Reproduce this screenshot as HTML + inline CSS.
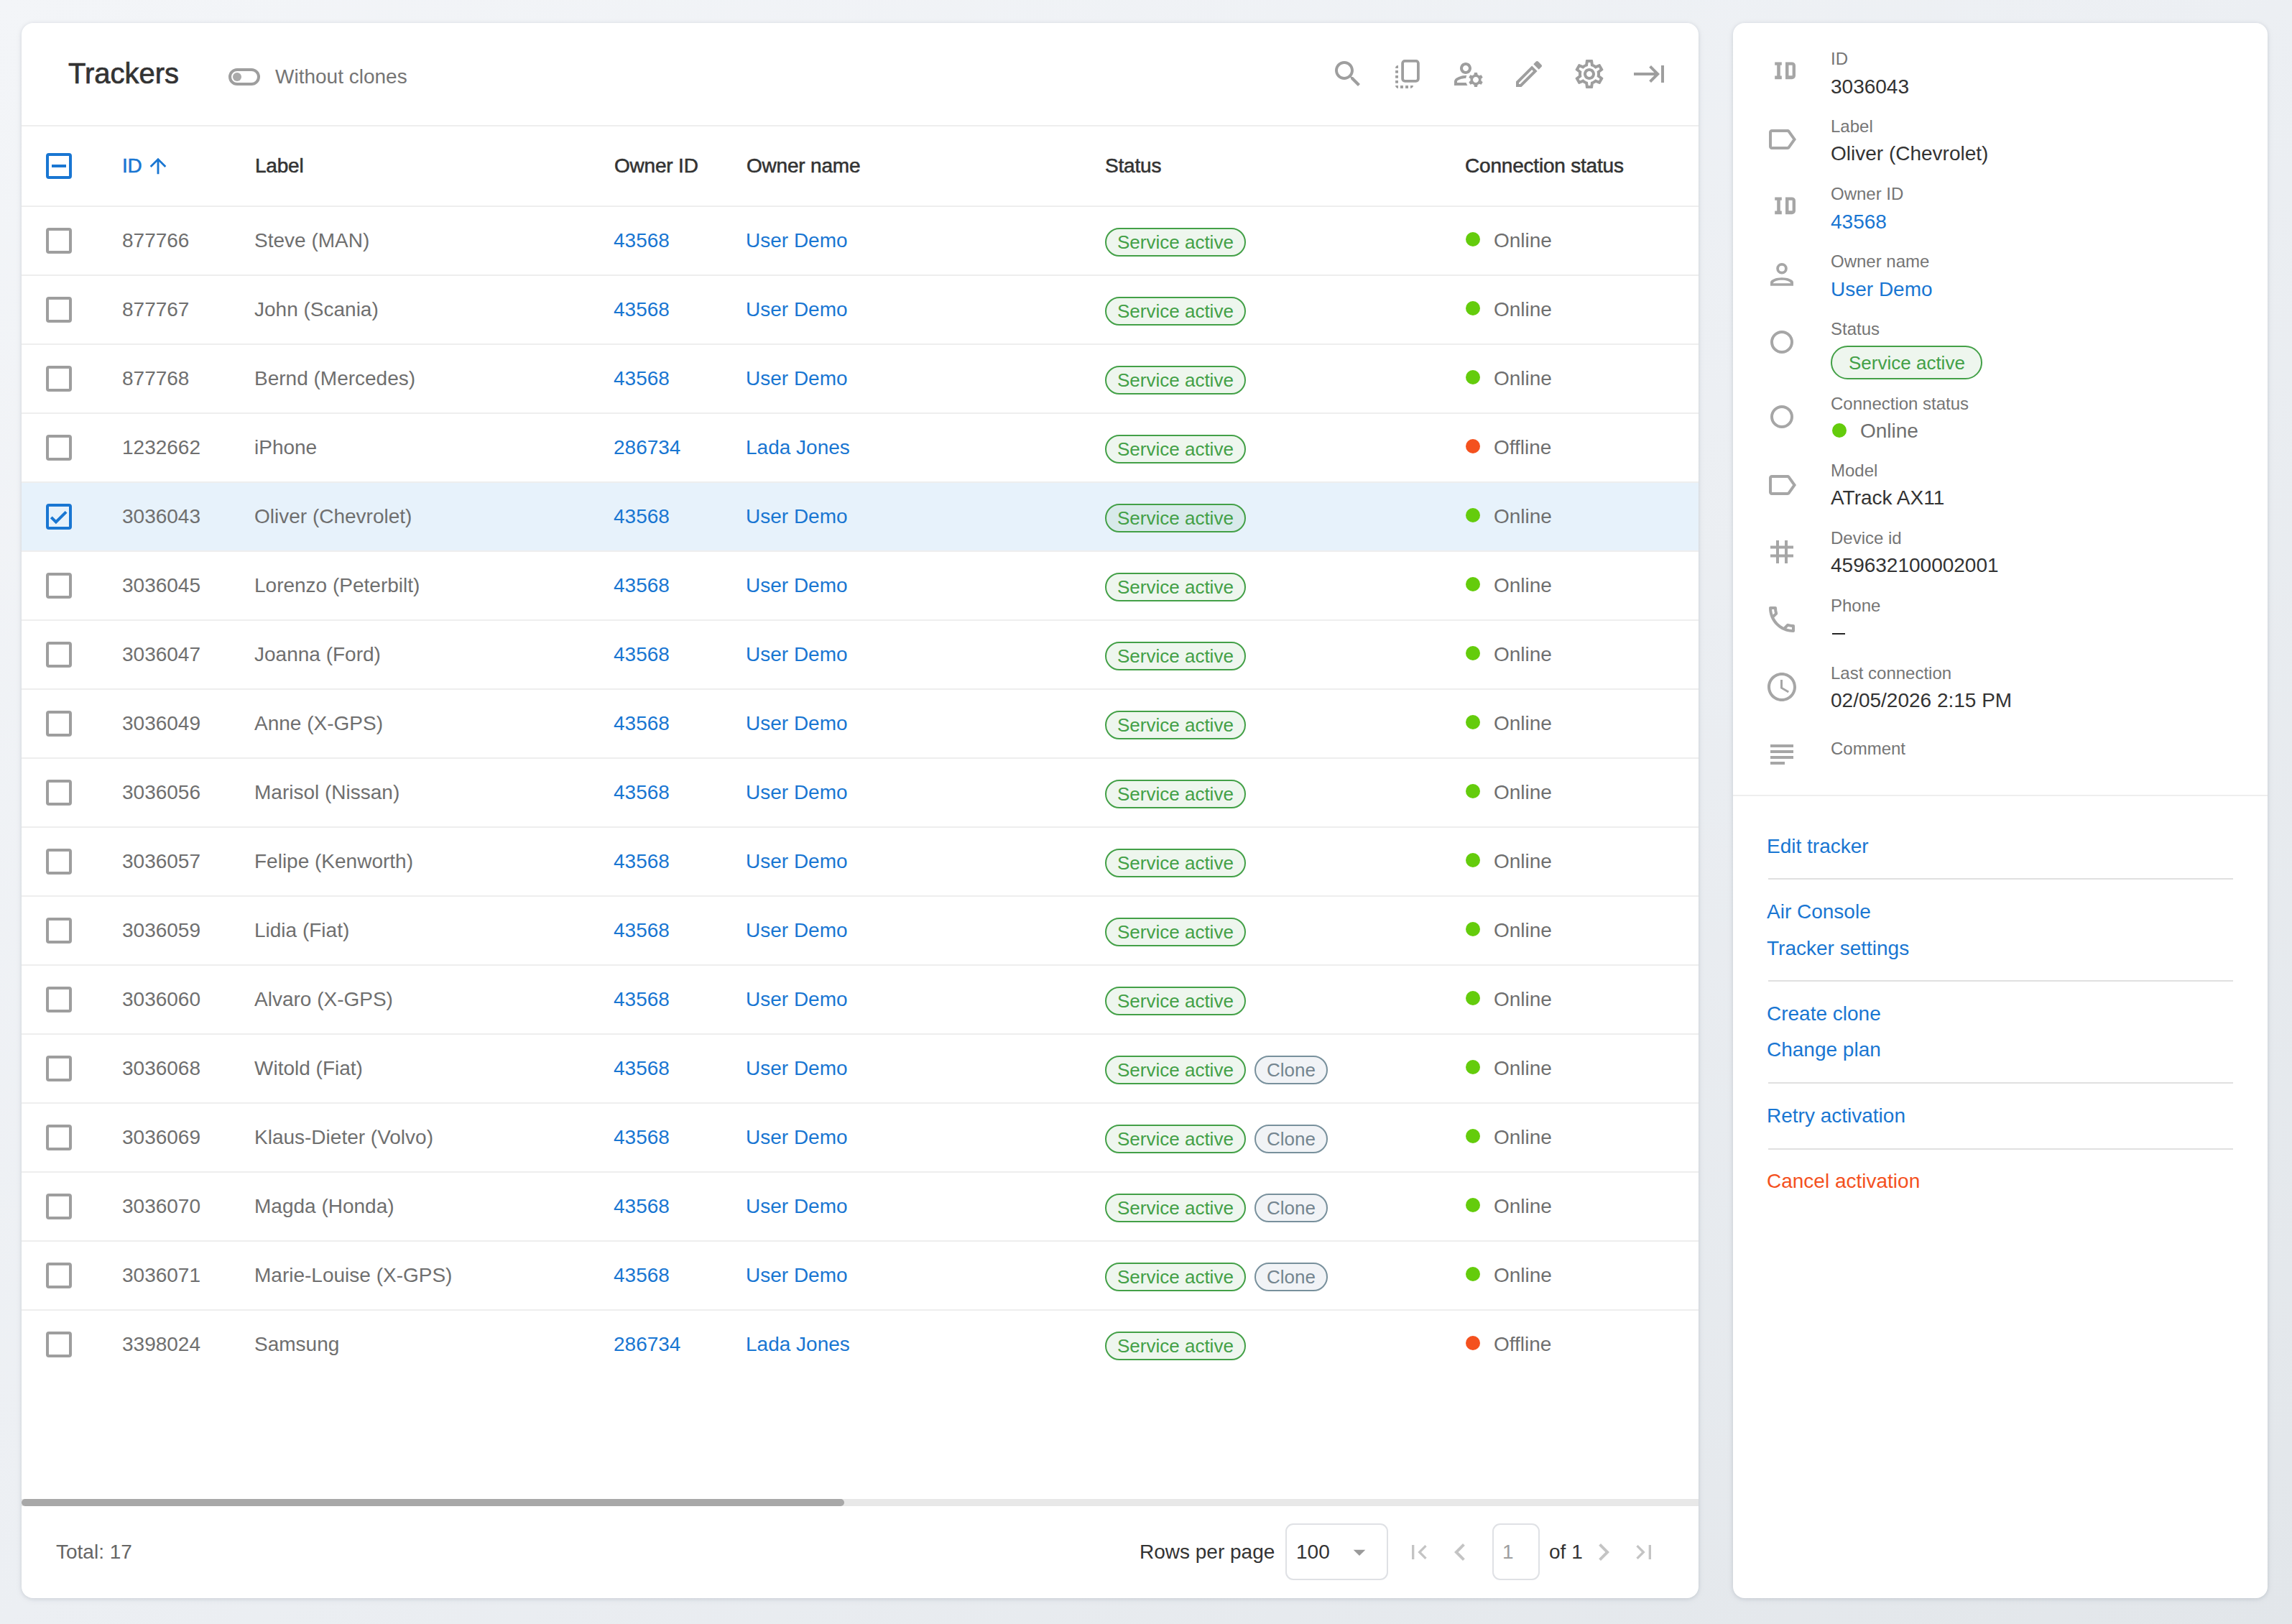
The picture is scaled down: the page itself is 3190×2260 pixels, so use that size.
<!DOCTYPE html><html><head><meta charset="utf-8"><style>
*{margin:0;padding:0;box-sizing:border-box}
html,body{width:3190px;height:2260px;overflow:hidden}
body{background:linear-gradient(to bottom right,#f3f5f8 0%,#eceff3 50%,#e2e6ea 100%);font-family:"Liberation Sans",sans-serif;position:relative;color:#333}
.card{position:absolute;background:#fff;border-radius:16px;box-shadow:0 1px 5px rgba(40,50,70,.13),0 2px 12px rgba(40,50,70,.05)}
.ic{position:absolute;display:block}
.t{position:absolute;white-space:nowrap;line-height:1}
.med{-webkit-text-stroke:0.55px currentColor;letter-spacing:-0.2px}
.ttl{-webkit-text-stroke:0.7px currentColor}
.hl{position:absolute;height:2px;background:#eeeeee}
.cb{position:absolute;width:36px;height:36px;border:4px solid #9e9e9e;border-radius:4px}
.cb.on{border-color:#1976d2}
.chip{position:absolute;height:40px;border:2px solid #43a047;background:rgba(67,160,71,.09);color:#43a047;border-radius:20px;font-size:26px;line-height:37px;padding:0 15px;white-space:nowrap}
.chip.clone{border-color:#78909c;background:#f1f3f6;color:#74858f}
.dot{position:absolute;width:20px;height:20px;border-radius:50%;background:#64cc0c}
.dot.off{background:#f4511e}
.row{position:absolute;left:0;width:2334px;height:96px}
.blue{color:#1976d2}
.gray{color:#6f6f6f}
</style></head><body>
<div class="card" style="left:30px;top:32px;width:2334px;height:2192px;overflow:hidden">
<div class="t ttl" style="left:65.0px;top:50.1px;font-size:40px;color:#333;">Trackers</div>
<div style="position:absolute;left:288px;top:63px;width:44px;height:24px;border:4px solid #9e9e9e;border-radius:12px"></div>
<div style="position:absolute;left:294px;top:69px;width:12px;height:12px;border-radius:6px;background:#aaaaaa"></div>
<div class="t " style="left:353.0px;top:60.9px;font-size:28px;color:#757575;">Without clones</div>
<svg class="ic" style="left:1822px;top:47px;width:48px;height:48px;fill:#9e9e9e;color:#9e9e9e" viewBox="0 0 24 24"><path d="M15.5 14h-.79l-.28-.27C15.41 12.59 16 11.11 16 9.5 16 5.91 13.09 3 9.5 3S3 5.91 3 9.5 5.91 16 9.5 16c1.61 0 3.09-.59 4.23-1.57l.27.28v.79l5 4.99L20.49 19l-4.99-5zm-6 0C7.01 14 5 11.99 5 9.5S7.01 5 9.5 5 14 7.01 14 9.5 11.99 14 9.5 14z"/></svg>
<svg class="ic" style="left:1906px;top:47px;width:48px;height:48px;fill:#9e9e9e;color:#9e9e9e" viewBox="0 0 24 24"><g transform="scale(0.5)"><rect x="16.1" y="5.8" width="21.8" height="28" rx="3.2" fill="none" stroke="currentColor" stroke-width="3.8"/><path d="M10 12V15.9H6.1A3.9 3.9 0 0 1 10 12ZM6.1 19.1h3.9v3.7H6.1zM6.1 26h3.9v3.7H6.1zM6.1 33h3.9v3.7H6.1zM6.1 40H10V44A3.9 3.9 0 0 1 6.1 40ZM13 40h3.9v4H13zM20.1 40H24v4h-3.9zM27 40H31A3.9 3.9 0 0 1 27 44Z"/></g></svg>
<svg class="ic" style="left:1990px;top:47px;width:48px;height:48px;fill:#9e9e9e;color:#9e9e9e" viewBox="0 0 24 24"><path d="M4 18v-.65c0-.34.16-.66.41-.81C6.1 15.53 8.03 15 10 15c.03 0 .05 0 .08.01.1-.7.3-1.37.59-1.98-.22-.02-.44-.03-.67-.03-2.420 0-4.68.67-6.61 1.82-.88.52-1.39 1.5-1.39 2.53V20h9.26c-.42-.6-.75-1.28-.97-2H4zM10 12c2.21 0 4-1.79 4-4s-1.79-4-4-4-4 1.79-4 4 1.79 4 4 4zm0-6c1.1 0 2 .9 2 2s-.9 2-2 2-2-.9-2-2 .9-2 2-2zM20.75 16c0-.22-.03-.42-.06-.63l1.14-1.01-1-1.73-1.45.49c-.32-.27-.68-.48-1.08-.63L18 11h-2l-.3 1.49c-.4.15-.76.36-1.08.63l-1.45-.49-1 1.73 1.14 1.01c-.03.21-.06.41-.06.63s.03.42.06.63l-1.14 1.01 1 1.73 1.45-.49c.32.27.68.48 1.08.63L16 21h2l.3-1.49c.4-.15.76-.36 1.08-.63l1.45.49 1-1.73-1.14-1.01c.03-.21.06-.41.06-.63zM17 18c-1.1 0-2-.9-2-2s.9-2 2-2 2 .9 2 2-.9 2-2 2z"/></svg>
<svg class="ic" style="left:2074px;top:47px;width:48px;height:48px;fill:#9e9e9e;color:#9e9e9e" viewBox="0 0 24 24"><path d="M3 17.25V21h3.75L17.81 9.94l-3.75-3.75L3 17.25zM5.92 19H5v-.92l9.06-9.06.92.92L5.92 19zM20.71 5.63l-2.34-2.34c-.2-.2-.45-.29-.71-.29s-.51.1-.7.29l-1.83 1.83 3.75 3.75 1.83-1.83c.39-.39.39-1.02 0-1.41z"/></svg>
<svg class="ic" style="left:2158px;top:47px;width:48px;height:48px;fill:#9e9e9e;color:#9e9e9e" viewBox="0 0 24 24"><path d="M19.43 12.98c.04-.32.07-.64.07-.98 0-.34-.03-.66-.07-.98l2.11-1.65c.19-.15.24-.42.12-.64l-2-3.46c-.09-.16-.26-.25-.44-.25-.06 0-.12.01-.17.03l-2.49 1c-.52-.4-1.08-.73-1.69-.98l-.38-2.65C14.46 2.18 14.25 2 14 2h-4c-.25 0-.46.18-.49.42l-.38 2.65c-.61.25-1.170.59-1.69.98l-2.49-1c-.06-.02-.12-.03-.18-.03-.17 0-.34.09-.43.25l-2 3.46c-.13.22-.07.49.12.64l2.11 1.65c-.04.32-.07.65-.07.98 0 .33.03.66.07.98l-2.11 1.65c-.19.15-.24.42-.12.64l2 3.46c.09.16.26.25.44.25.06 0 .12-.01.17-.03l2.49-1c.52.4 1.08.73 1.69.98l.38 2.65c.03.24.24.42.49.42h4c.25 0 .46-.18.49-.42l.38-2.65c.61-.25 1.17-.59 1.69-.98l2.49 1c.06.02.12.03.18.03.17 0 .34-.09.43-.25l2-3.46c.12-.22.07-.49-.12-.64l-2.11-1.65zm-1.98-1.71c.04.31.05.52.05.73 0 .21-.02.43-.05.73l-.14 1.13.89.7 1.08.84-.7 1.21-1.27-.51-1.04-.42-.9.68c-.43.32-.84.56-1.25.73l-1.06.43-.16 1.13-.2 1.35h-1.4l-.19-1.35-.16-1.130-1.06-.43c-.43-.18-.83-.41-1.23-.71l-.91-.7-1.06.43-1.27.51-.7-1.21 1.08-.84.89-.7-.14-1.13c-.03-.31-.05-.54-.05-.74s.02-.43.05-.73l.14-1.13-.89-.7-1.08-.84.7-1.21 1.27.51 1.04.42.9-.68c.43-.32.84-.56 1.25-.73l1.06-.43.16-1.13.2-1.35h1.39l.19 1.35.16 1.13 1.06.43c.43.18.83.41 1.23.71l.91.7 1.06-.43 1.27-.51.7 1.21-1.07.85-.89.7.14 1.13zM12 8c-2.21 0-4 1.79-4 4s1.79 4 4 4 4-1.79 4-4-1.79-4-4-4zm0 6c-1.1 0-2-.9-2-2s.9-2 2-2 2 .9 2 2-.9 2-2 2z"/></svg>
<svg class="ic" style="left:2242px;top:47px;width:48px;height:48px;fill:#9e9e9e;color:#9e9e9e" viewBox="0 0 24 24"><path d="M11.59 7.41L15.17 11H1v2h14.17l-3.59 3.59L13 18l6-6-6-6-1.41 1.41zM20 6v12h2V6h-2z"/></svg>
<div class="hl" style="left:0;top:142px;width:2334px"></div>
<div class="cb on" style="left:34px;top:181px"></div>
<div style="position:absolute;left:42px;top:197px;width:20px;height:4px;background:#1976d2"></div>
<div class="t med" style="left:140.0px;top:184.7px;font-size:28px;color:#1976d2;">ID</div>
<svg class="ic" style="left:172.6px;top:182.1px;width:34px;height:34px;fill:#1976d2;color:#1976d2" viewBox="0 0 24 24"><path d="M4 12l1.41 1.41L11 7.83V20h2V7.83l5.58 5.59L20 12l-8-8-8 8z"/></svg>
<div class="t med" style="left:325.0px;top:184.7px;font-size:28px;color:#333;">Label</div>
<div class="t med" style="left:825.0px;top:184.7px;font-size:28px;color:#333;">Owner ID</div>
<div class="t med" style="left:1009.0px;top:184.7px;font-size:28px;color:#333;">Owner name</div>
<div class="t med" style="left:1508.0px;top:184.7px;font-size:28px;color:#333;">Status</div>
<div class="t med" style="left:2009.0px;top:184.7px;font-size:28px;color:#333;">Connection status</div>
<div class="hl" style="left:0;top:254px;width:2334px"></div>
<div class="cb" style="left:34px;top:285px"></div>
<div class="t gray" style="left:140.0px;top:289.4px;font-size:28px;">877766</div>
<div class="t gray" style="left:324.0px;top:289.4px;font-size:28px;">Steve (MAN)</div>
<div class="t blue" style="left:824.0px;top:289.4px;font-size:28px;">43568</div>
<div class="t blue" style="left:1008.0px;top:289.4px;font-size:28px;">User Demo</div>
<div class="chip" style="left:1508px;top:285px">Service active</div>
<div class="dot" style="left:2010px;top:291px"></div>
<div class="t gray" style="left:2049.0px;top:289.4px;font-size:28px;">Online</div>
<div class="hl" style="left:0;top:350px;width:2334px"></div>
<div class="cb" style="left:34px;top:381px"></div>
<div class="t gray" style="left:140.0px;top:385.4px;font-size:28px;">877767</div>
<div class="t gray" style="left:324.0px;top:385.4px;font-size:28px;">John (Scania)</div>
<div class="t blue" style="left:824.0px;top:385.4px;font-size:28px;">43568</div>
<div class="t blue" style="left:1008.0px;top:385.4px;font-size:28px;">User Demo</div>
<div class="chip" style="left:1508px;top:381px">Service active</div>
<div class="dot" style="left:2010px;top:387px"></div>
<div class="t gray" style="left:2049.0px;top:385.4px;font-size:28px;">Online</div>
<div class="hl" style="left:0;top:446px;width:2334px"></div>
<div class="cb" style="left:34px;top:477px"></div>
<div class="t gray" style="left:140.0px;top:481.4px;font-size:28px;">877768</div>
<div class="t gray" style="left:324.0px;top:481.4px;font-size:28px;">Bernd (Mercedes)</div>
<div class="t blue" style="left:824.0px;top:481.4px;font-size:28px;">43568</div>
<div class="t blue" style="left:1008.0px;top:481.4px;font-size:28px;">User Demo</div>
<div class="chip" style="left:1508px;top:477px">Service active</div>
<div class="dot" style="left:2010px;top:483px"></div>
<div class="t gray" style="left:2049.0px;top:481.4px;font-size:28px;">Online</div>
<div class="hl" style="left:0;top:542px;width:2334px"></div>
<div class="cb" style="left:34px;top:573px"></div>
<div class="t gray" style="left:140.0px;top:577.4px;font-size:28px;">1232662</div>
<div class="t gray" style="left:324.0px;top:577.4px;font-size:28px;">iPhone</div>
<div class="t blue" style="left:824.0px;top:577.4px;font-size:28px;">286734</div>
<div class="t blue" style="left:1008.0px;top:577.4px;font-size:28px;">Lada Jones</div>
<div class="chip" style="left:1508px;top:573px">Service active</div>
<div class="dot off" style="left:2010px;top:579px"></div>
<div class="t gray" style="left:2049.0px;top:577.4px;font-size:28px;">Offline</div>
<div style="position:absolute;left:0;top:640px;width:2334px;height:94px;background:#e7f2fb"></div>
<div class="hl" style="left:0;top:638px;width:2334px"></div>
<div class="cb on" style="left:34px;top:669px"></div>
<svg class="ic" style="left:34px;top:669px;width:36px;height:36px;fill:#1976d2;color:#1976d2" viewBox="0 0 36 36"><path d="M7.3 18.9L13.9 25.5 28.1 11.3" fill="none" stroke="currentColor" stroke-width="4" stroke-linecap="butt" stroke-linejoin="miter"/></svg>
<div class="t gray" style="left:140.0px;top:673.4px;font-size:28px;">3036043</div>
<div class="t gray" style="left:324.0px;top:673.4px;font-size:28px;">Oliver (Chevrolet)</div>
<div class="t blue" style="left:824.0px;top:673.4px;font-size:28px;">43568</div>
<div class="t blue" style="left:1008.0px;top:673.4px;font-size:28px;">User Demo</div>
<div class="chip" style="left:1508px;top:669px">Service active</div>
<div class="dot" style="left:2010px;top:675px"></div>
<div class="t gray" style="left:2049.0px;top:673.4px;font-size:28px;">Online</div>
<div class="hl" style="left:0;top:734px;width:2334px"></div>
<div class="cb" style="left:34px;top:765px"></div>
<div class="t gray" style="left:140.0px;top:769.4px;font-size:28px;">3036045</div>
<div class="t gray" style="left:324.0px;top:769.4px;font-size:28px;">Lorenzo (Peterbilt)</div>
<div class="t blue" style="left:824.0px;top:769.4px;font-size:28px;">43568</div>
<div class="t blue" style="left:1008.0px;top:769.4px;font-size:28px;">User Demo</div>
<div class="chip" style="left:1508px;top:765px">Service active</div>
<div class="dot" style="left:2010px;top:771px"></div>
<div class="t gray" style="left:2049.0px;top:769.4px;font-size:28px;">Online</div>
<div class="hl" style="left:0;top:830px;width:2334px"></div>
<div class="cb" style="left:34px;top:861px"></div>
<div class="t gray" style="left:140.0px;top:865.4px;font-size:28px;">3036047</div>
<div class="t gray" style="left:324.0px;top:865.4px;font-size:28px;">Joanna (Ford)</div>
<div class="t blue" style="left:824.0px;top:865.4px;font-size:28px;">43568</div>
<div class="t blue" style="left:1008.0px;top:865.4px;font-size:28px;">User Demo</div>
<div class="chip" style="left:1508px;top:861px">Service active</div>
<div class="dot" style="left:2010px;top:867px"></div>
<div class="t gray" style="left:2049.0px;top:865.4px;font-size:28px;">Online</div>
<div class="hl" style="left:0;top:926px;width:2334px"></div>
<div class="cb" style="left:34px;top:957px"></div>
<div class="t gray" style="left:140.0px;top:961.4px;font-size:28px;">3036049</div>
<div class="t gray" style="left:324.0px;top:961.4px;font-size:28px;">Anne (X-GPS)</div>
<div class="t blue" style="left:824.0px;top:961.4px;font-size:28px;">43568</div>
<div class="t blue" style="left:1008.0px;top:961.4px;font-size:28px;">User Demo</div>
<div class="chip" style="left:1508px;top:957px">Service active</div>
<div class="dot" style="left:2010px;top:963px"></div>
<div class="t gray" style="left:2049.0px;top:961.4px;font-size:28px;">Online</div>
<div class="hl" style="left:0;top:1022px;width:2334px"></div>
<div class="cb" style="left:34px;top:1053px"></div>
<div class="t gray" style="left:140.0px;top:1057.4px;font-size:28px;">3036056</div>
<div class="t gray" style="left:324.0px;top:1057.4px;font-size:28px;">Marisol (Nissan)</div>
<div class="t blue" style="left:824.0px;top:1057.4px;font-size:28px;">43568</div>
<div class="t blue" style="left:1008.0px;top:1057.4px;font-size:28px;">User Demo</div>
<div class="chip" style="left:1508px;top:1053px">Service active</div>
<div class="dot" style="left:2010px;top:1059px"></div>
<div class="t gray" style="left:2049.0px;top:1057.4px;font-size:28px;">Online</div>
<div class="hl" style="left:0;top:1118px;width:2334px"></div>
<div class="cb" style="left:34px;top:1149px"></div>
<div class="t gray" style="left:140.0px;top:1153.4px;font-size:28px;">3036057</div>
<div class="t gray" style="left:324.0px;top:1153.4px;font-size:28px;">Felipe (Kenworth)</div>
<div class="t blue" style="left:824.0px;top:1153.4px;font-size:28px;">43568</div>
<div class="t blue" style="left:1008.0px;top:1153.4px;font-size:28px;">User Demo</div>
<div class="chip" style="left:1508px;top:1149px">Service active</div>
<div class="dot" style="left:2010px;top:1155px"></div>
<div class="t gray" style="left:2049.0px;top:1153.4px;font-size:28px;">Online</div>
<div class="hl" style="left:0;top:1214px;width:2334px"></div>
<div class="cb" style="left:34px;top:1245px"></div>
<div class="t gray" style="left:140.0px;top:1249.4px;font-size:28px;">3036059</div>
<div class="t gray" style="left:324.0px;top:1249.4px;font-size:28px;">Lidia (Fiat)</div>
<div class="t blue" style="left:824.0px;top:1249.4px;font-size:28px;">43568</div>
<div class="t blue" style="left:1008.0px;top:1249.4px;font-size:28px;">User Demo</div>
<div class="chip" style="left:1508px;top:1245px">Service active</div>
<div class="dot" style="left:2010px;top:1251px"></div>
<div class="t gray" style="left:2049.0px;top:1249.4px;font-size:28px;">Online</div>
<div class="hl" style="left:0;top:1310px;width:2334px"></div>
<div class="cb" style="left:34px;top:1341px"></div>
<div class="t gray" style="left:140.0px;top:1345.4px;font-size:28px;">3036060</div>
<div class="t gray" style="left:324.0px;top:1345.4px;font-size:28px;">Alvaro (X-GPS)</div>
<div class="t blue" style="left:824.0px;top:1345.4px;font-size:28px;">43568</div>
<div class="t blue" style="left:1008.0px;top:1345.4px;font-size:28px;">User Demo</div>
<div class="chip" style="left:1508px;top:1341px">Service active</div>
<div class="dot" style="left:2010px;top:1347px"></div>
<div class="t gray" style="left:2049.0px;top:1345.4px;font-size:28px;">Online</div>
<div class="hl" style="left:0;top:1406px;width:2334px"></div>
<div class="cb" style="left:34px;top:1437px"></div>
<div class="t gray" style="left:140.0px;top:1441.4px;font-size:28px;">3036068</div>
<div class="t gray" style="left:324.0px;top:1441.4px;font-size:28px;">Witold (Fiat)</div>
<div class="t blue" style="left:824.0px;top:1441.4px;font-size:28px;">43568</div>
<div class="t blue" style="left:1008.0px;top:1441.4px;font-size:28px;">User Demo</div>
<div class="chip" style="left:1508px;top:1437px">Service active</div>
<div class="chip clone" style="left:1716px;top:1437px">Clone</div>
<div class="dot" style="left:2010px;top:1443px"></div>
<div class="t gray" style="left:2049.0px;top:1441.4px;font-size:28px;">Online</div>
<div class="hl" style="left:0;top:1502px;width:2334px"></div>
<div class="cb" style="left:34px;top:1533px"></div>
<div class="t gray" style="left:140.0px;top:1537.4px;font-size:28px;">3036069</div>
<div class="t gray" style="left:324.0px;top:1537.4px;font-size:28px;">Klaus-Dieter (Volvo)</div>
<div class="t blue" style="left:824.0px;top:1537.4px;font-size:28px;">43568</div>
<div class="t blue" style="left:1008.0px;top:1537.4px;font-size:28px;">User Demo</div>
<div class="chip" style="left:1508px;top:1533px">Service active</div>
<div class="chip clone" style="left:1716px;top:1533px">Clone</div>
<div class="dot" style="left:2010px;top:1539px"></div>
<div class="t gray" style="left:2049.0px;top:1537.4px;font-size:28px;">Online</div>
<div class="hl" style="left:0;top:1598px;width:2334px"></div>
<div class="cb" style="left:34px;top:1629px"></div>
<div class="t gray" style="left:140.0px;top:1633.4px;font-size:28px;">3036070</div>
<div class="t gray" style="left:324.0px;top:1633.4px;font-size:28px;">Magda (Honda)</div>
<div class="t blue" style="left:824.0px;top:1633.4px;font-size:28px;">43568</div>
<div class="t blue" style="left:1008.0px;top:1633.4px;font-size:28px;">User Demo</div>
<div class="chip" style="left:1508px;top:1629px">Service active</div>
<div class="chip clone" style="left:1716px;top:1629px">Clone</div>
<div class="dot" style="left:2010px;top:1635px"></div>
<div class="t gray" style="left:2049.0px;top:1633.4px;font-size:28px;">Online</div>
<div class="hl" style="left:0;top:1694px;width:2334px"></div>
<div class="cb" style="left:34px;top:1725px"></div>
<div class="t gray" style="left:140.0px;top:1729.4px;font-size:28px;">3036071</div>
<div class="t gray" style="left:324.0px;top:1729.4px;font-size:28px;">Marie-Louise (X-GPS)</div>
<div class="t blue" style="left:824.0px;top:1729.4px;font-size:28px;">43568</div>
<div class="t blue" style="left:1008.0px;top:1729.4px;font-size:28px;">User Demo</div>
<div class="chip" style="left:1508px;top:1725px">Service active</div>
<div class="chip clone" style="left:1716px;top:1725px">Clone</div>
<div class="dot" style="left:2010px;top:1731px"></div>
<div class="t gray" style="left:2049.0px;top:1729.4px;font-size:28px;">Online</div>
<div class="hl" style="left:0;top:1790px;width:2334px"></div>
<div class="cb" style="left:34px;top:1821px"></div>
<div class="t gray" style="left:140.0px;top:1825.4px;font-size:28px;">3398024</div>
<div class="t gray" style="left:324.0px;top:1825.4px;font-size:28px;">Samsung</div>
<div class="t blue" style="left:824.0px;top:1825.4px;font-size:28px;">286734</div>
<div class="t blue" style="left:1008.0px;top:1825.4px;font-size:28px;">Lada Jones</div>
<div class="chip" style="left:1508px;top:1821px">Service active</div>
<div class="dot off" style="left:2010px;top:1827px"></div>
<div class="t gray" style="left:2049.0px;top:1825.4px;font-size:28px;">Offline</div>
<div style="position:absolute;left:0;top:2054px;width:2334px;height:10px;background:#e8e8e8"></div>
<div style="position:absolute;left:0;top:2054px;width:1145px;height:10px;background:#a8a8a8;border-radius:5px"></div>
<div class="t " style="left:48.0px;top:2113.9px;font-size:28px;color:#666;">Total: 17</div>
<div class="t " style="left:1556.0px;top:2113.9px;font-size:28px;color:#333;">Rows per page</div>
<div style="position:absolute;left:1759px;top:2088px;width:143px;height:79px;border:2px solid #dfe1e5;border-radius:11px"></div>
<div class="t " style="left:1774.0px;top:2113.9px;font-size:28px;color:#333;">100</div>
<svg class="ic" style="left:1842px;top:2107.6px;width:40px;height:40px;fill:#9a9a9a;color:#9a9a9a" viewBox="0 0 24 24"><path d="M7 10l5 5 5-5z"/></svg>
<svg class="ic" style="left:1925.4px;top:2108px;width:40px;height:40px;fill:#c4c4c4;color:#c4c4c4" viewBox="0 0 24 24"><path d="M18.41 16.59L13.82 12l4.59-4.59L17 6l-6 6 6 6zM6 6h2v12H6z"/></svg>
<svg class="ic" style="left:1977.8px;top:2104px;width:48px;height:48px;fill:#c4c4c4;color:#c4c4c4" viewBox="0 0 24 24"><path d="M15.41 7.41L14 6l-6 6 6 6 1.41-1.41L10.83 12z"/></svg>
<div style="position:absolute;left:2047px;top:2088px;width:66px;height:79px;border:2px solid #dfe1e5;border-radius:11px"></div>
<div class="t " style="left:2061.0px;top:2113.9px;font-size:28px;color:#9e9e9e;">1</div>
<div class="t " style="left:2126.0px;top:2113.9px;font-size:28px;color:#333;">of 1</div>
<svg class="ic" style="left:2178px;top:2104px;width:48px;height:48px;fill:#c4c4c4;color:#c4c4c4" viewBox="0 0 24 24"><path d="M10 6L8.59 7.41 13.17 12l-4.58 4.59L10 18l6-6z"/></svg>
<svg class="ic" style="left:2238.2px;top:2108px;width:40px;height:40px;fill:#c4c4c4;color:#c4c4c4" viewBox="0 0 24 24"><path d="M5.59 7.41L10.18 12l-4.59 4.59L7 18l6-6-6-6zM16 6h2v12h-2z"/></svg>
</div>
<div class="card" style="left:2412px;top:32px;width:744px;height:2192px;overflow:hidden">
<svg class="ic" style="left:44px;top:41.5px;width:48px;height:48px;fill:#a6a6a6;color:#a6a6a6" viewBox="0 0 48 48"><path d="M14.2 12.4h9.6v4.3h-2v14.9h2v4.6h-9.6v-4.6h3v-14.9h-3zM29 12.4h9a5 5 0 0 1 5 5v13.8a5 5 0 0 1-5 5h-9zM33.5 16.7v14.6h5.1v-14.6z" fill-rule="evenodd"/></svg>
<div class="t " style="left:136.0px;top:37.7px;font-size:24px;color:#757575;">ID</div>
<div class="t " style="left:136.0px;top:74.9px;font-size:28px;color:#333;">3036043</div>
<svg class="ic" style="left:44px;top:138px;width:48px;height:48px;fill:#a6a6a6;color:#a6a6a6" viewBox="0 0 24 24"><path d="M17.63 5.84C17.27 5.33 16.67 5 16 5L5 5.01C3.9 5.01 3 5.9 3 7v10c0 1.1.9 1.99 2 1.99L16 19c.67 0 1.27-.33 1.63-.84L22 12l-4.37-6.16zM16 17H5V7h11l3.55 5L16 17z"/></svg>
<div class="t " style="left:136.0px;top:132.2px;font-size:24px;color:#757575;">Label</div>
<div class="t " style="left:136.0px;top:168.4px;font-size:28px;color:#333;">Oliver (Chevrolet)</div>
<svg class="ic" style="left:44px;top:229.5px;width:48px;height:48px;fill:#a6a6a6;color:#a6a6a6" viewBox="0 0 48 48"><path d="M14.2 12.4h9.6v4.3h-2v14.9h2v4.6h-9.6v-4.6h3v-14.9h-3zM29 12.4h9a5 5 0 0 1 5 5v13.8a5 5 0 0 1-5 5h-9zM33.5 16.7v14.6h5.1v-14.6z" fill-rule="evenodd"/></svg>
<div class="t " style="left:136.0px;top:226.2px;font-size:24px;color:#757575;">Owner ID</div>
<div class="t " style="left:136.0px;top:262.9px;font-size:28px;color:#333;"><span class="blue">43568</span></div>
<svg class="ic" style="left:44px;top:326px;width:48px;height:48px;fill:#a6a6a6;color:#a6a6a6" viewBox="0 0 48 48"><circle cx="24" cy="15.8" r="5.9" fill="none" stroke="currentColor" stroke-width="3.8"/><path fill-rule="evenodd" d="M8 39.8V35C8 31 16 28.2 24 28.2S40 31 40 35V39.8ZM11.6 36.3H36.4C35.6 33.6 30 31.7 24 31.7S12.4 33.6 11.6 36.3Z"/></svg>
<div class="t " style="left:136.0px;top:319.7px;font-size:24px;color:#757575;">Owner name</div>
<div class="t " style="left:136.0px;top:356.9px;font-size:28px;color:#333;"><span class="blue">User Demo</span></div>
<svg class="ic" style="left:44px;top:419.8px;width:48px;height:48px;fill:#a6a6a6;color:#a6a6a6" viewBox="0 0 48 48"><circle cx="24" cy="24" r="14" fill="none" stroke="currentColor" stroke-width="4"/></svg>
<div class="t " style="left:136.0px;top:414.2px;font-size:24px;color:#757575;">Status</div>
<svg class="ic" style="left:44px;top:523.8px;width:48px;height:48px;fill:#a6a6a6;color:#a6a6a6" viewBox="0 0 48 48"><circle cx="24" cy="24" r="14" fill="none" stroke="currentColor" stroke-width="4"/></svg>
<div class="t " style="left:136.0px;top:517.7px;font-size:24px;color:#757575;">Connection status</div>
<svg class="ic" style="left:44px;top:619px;width:48px;height:48px;fill:#a6a6a6;color:#a6a6a6" viewBox="0 0 24 24"><path d="M17.63 5.84C17.27 5.33 16.67 5 16 5L5 5.01C3.9 5.01 3 5.9 3 7v10c0 1.1.9 1.99 2 1.99L16 19c.67 0 1.27-.33 1.63-.84L22 12l-4.37-6.16zM16 17H5V7h11l3.55 5L16 17z"/></svg>
<div class="t " style="left:136.0px;top:611.4px;font-size:24px;color:#757575;">Model</div>
<div class="t " style="left:136.0px;top:647.4px;font-size:28px;color:#333;">ATrack AX11</div>
<svg class="ic" style="left:44px;top:712px;width:48px;height:48px;fill:#a6a6a6;color:#a6a6a6" viewBox="0 0 48 48"><path d="M16 8h4v32h-4zM28 8h4v32h-4zM8 15.6h32v4H8zM8 27.5h32v4H8z"/></svg>
<div class="t " style="left:136.0px;top:705.0px;font-size:24px;color:#757575;">Device id</div>
<div class="t " style="left:136.0px;top:740.9px;font-size:28px;color:#333;">459632100002001</div>
<svg class="ic" style="left:44px;top:806px;width:48px;height:48px;fill:#a6a6a6;color:#a6a6a6" viewBox="0 0 24 24"><path d="M6.54 5c.06.89.21 1.76.45 2.59l-1.2 1.2c-.41-1.2-.67-2.47-.76-3.79h1.51m9.86 12.02c.85.24 1.72.39 2.6.45v1.49c-1.32-.09-2.59-.35-3.8-.75l1.2-1.19M7.5 3H4c-.55 0-1 .45-1 1 0 9.39 7.61 17 17 17 .55 0 1-.45 1-1v-3.49c0-.55-.45-1-1-1-1.24 0-2.45-.2-3.57-.57-.1-.04-.21-.05-.31-.05-.26 0-.51.1-.71.29l-2.2 2.2c-2.83-1.45-5.15-3.76-6.59-6.59l2.2-2.2c.28-.28.36-.67.25-1.02C8.7 6.45 8.5 5.25 8.5 4c0-.55-.45-1-1-1z"/></svg>
<div class="t " style="left:136.0px;top:798.7px;font-size:24px;color:#757575;">Phone</div>
<svg class="ic" style="left:44px;top:900px;width:48px;height:48px;fill:#a6a6a6;color:#a6a6a6" viewBox="0 0 24 24"><path d="M11.99 2C6.47 2 2 6.48 2 12s4.47 10 9.99 10C17.52 22 22 17.52 22 12S17.52 2 11.99 2zM12 20c-4.42 0-8-3.58-8-8s3.58-8 8-8 8 3.58 8 8-3.58 8-8 8zm.5-13H11v6l5.25 3.15.75-1.23-4.5-2.67z"/></svg>
<div class="t " style="left:136.0px;top:893.3px;font-size:24px;color:#757575;">Last connection</div>
<div class="t " style="left:136.0px;top:929.4px;font-size:28px;color:#333;">02/05/2026 2:15 PM</div>
<svg class="ic" style="left:44px;top:994px;width:48px;height:48px;fill:#a6a6a6;color:#a6a6a6" viewBox="0 0 24 24"><path d="M14 17H4v2h10v-2zm6-8H4v2h16V9zM4 15h16v-2H4v2zM4 5v2h16V5H4z"/></svg>
<div class="t " style="left:136.0px;top:998.3px;font-size:24px;color:#757575;">Comment</div>
<div class="chip" style="left:136px;top:449px;height:47px;line-height:44px;border-radius:24px;padding:0 22px 0 23px">Service active</div>
<div class="dot" style="left:138px;top:557px"></div>
<div class="t " style="left:177.0px;top:553.9px;font-size:28px;color:#6f6f6f;">Online</div>
<div style="position:absolute;left:138px;top:849px;width:18px;height:2px;background:#262626"></div>
<div class="hl" style="left:0;top:1074px;width:744px"></div>
<div class="t " style="left:47.0px;top:1131.9px;font-size:28px;color:#1976d2;">Edit tracker</div>
<div class="t " style="left:47.0px;top:1222.9px;font-size:28px;color:#1976d2;">Air Console</div>
<div class="t " style="left:47.0px;top:1273.9px;font-size:28px;color:#1976d2;">Tracker settings</div>
<div class="t " style="left:47.0px;top:1364.9px;font-size:28px;color:#1976d2;">Create clone</div>
<div class="t " style="left:47.0px;top:1414.9px;font-size:28px;color:#1976d2;">Change plan</div>
<div class="t " style="left:47.0px;top:1506.9px;font-size:28px;color:#1976d2;">Retry activation</div>
<div class="t " style="left:47.0px;top:1597.9px;font-size:28px;color:#f4511e;">Cancel activation</div>
<div class="hl" style="left:49px;top:1190px;width:647px;background:#e0e0e0"></div>
<div class="hl" style="left:49px;top:1332px;width:647px;background:#e0e0e0"></div>
<div class="hl" style="left:49px;top:1474px;width:647px;background:#e0e0e0"></div>
<div class="hl" style="left:49px;top:1566px;width:647px;background:#e0e0e0"></div>
</div>
</body></html>
